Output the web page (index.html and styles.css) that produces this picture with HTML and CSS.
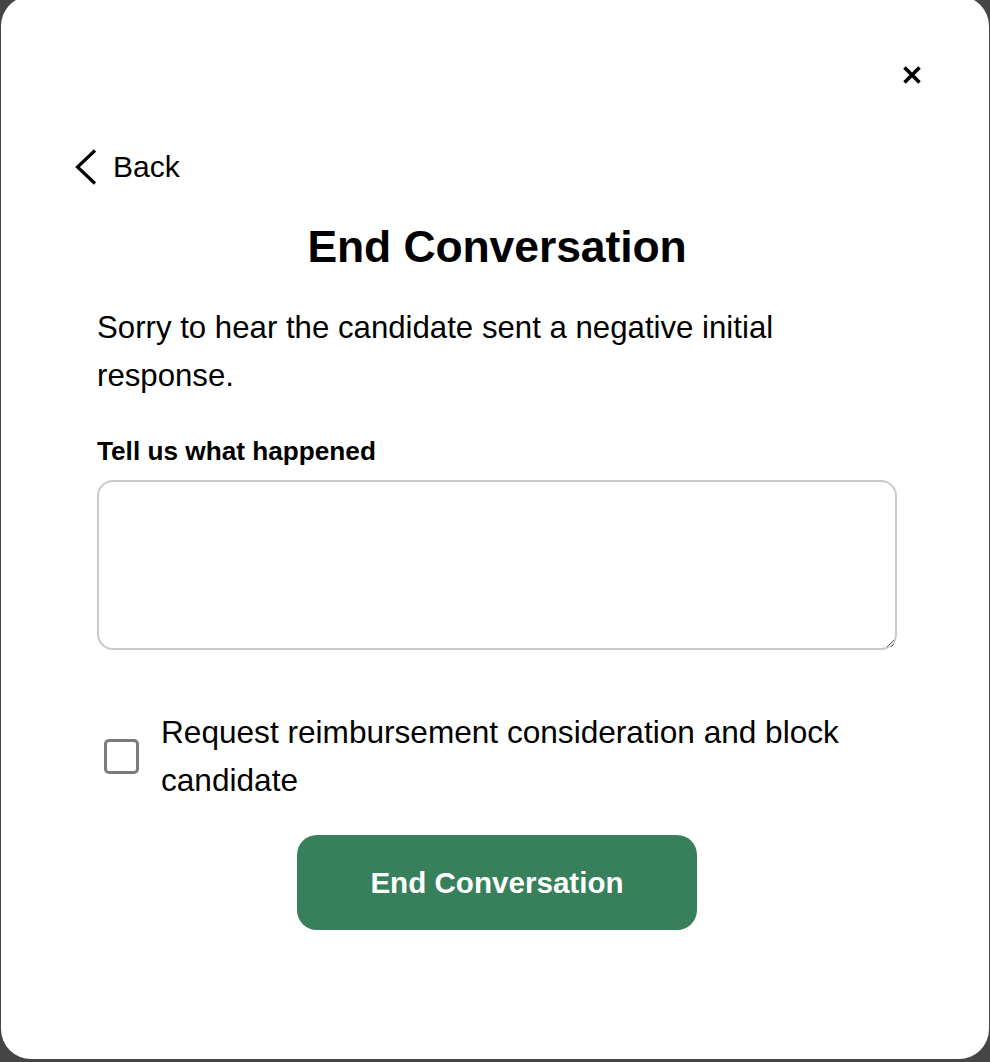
FILE: index.html
```html
<!DOCTYPE html>
<html lang="en">
<head>
<meta charset="utf-8">
<title>End Conversation</title>
<link rel="stylesheet" href="styles.css">
</head>
<body>
<div class="modal">
  <div class="modal-header">
    <button class="close-btn" aria-label="Close">
      <svg width="20" height="20" viewBox="0 0 20 20"><path d="M2.5 2.5 L17.5 17.5 M17.5 2.5 L2.5 17.5" stroke="#000" stroke-width="3.6" stroke-linecap="butt" fill="none"/></svg>
    </button>
  </div>
  <div class="modal-body">
    <a class="back-link" href="#">
      <svg class="chevron" width="24" height="36" viewBox="0 0 24 36"><polyline points="21,1.5 3.5,18 21,34.5" stroke="#000" stroke-width="3.2" fill="none" stroke-linejoin="miter"/></svg>
      <span>Back</span>
    </a>
    <h1 class="title">End Conversation</h1>
    <p class="intro">Sorry to hear the candidate sent a negative initial response.</p>
    <label class="field-label" for="what">Tell us what happened</label>
    <textarea id="what" class="field-input"></textarea>
    <label class="check-row">
      <span class="checkbox"></span>
      <span class="check-text">Request reimbursement consideration and block candidate</span>
    </label>
    <div class="actions">
      <button class="primary-btn">End Conversation</button>
    </div>
  </div>
</div>
</body>
</html>
```

FILE: styles.css
```css
* { box-sizing: border-box; }
html, body { margin: 0; padding: 0; }
body {
  background: #454545;
  font-family: "Liberation Sans", Arial, sans-serif;
  color: #000;
  height: 1062px;
  overflow: hidden;
}
.modal {
  margin: -4px 1px 0 1px;
  width: 988px;
  height: 1063px;
  background: #fff;
  border-radius: 30px;
  display: flex;
  flex-direction: column;
}
.modal-header {
  display: flex;
  justify-content: flex-end;
  padding: 69px 67px 0 0;
}
.close-btn {
  border: 0;
  background: none;
  padding: 0;
  width: 20px;
  height: 20px;
  display: block;
  cursor: pointer;
}
.close-btn svg { display: block; }
.modal-body {
  padding: 0 92px 0 96px;
  display: flex;
  flex-direction: column;
}
.back-link {
  margin: 64px 0 0 -23px;
  display: flex;
  align-items: center;
  gap: 15px;
  height: 36px;
  color: #000;
  text-decoration: none;
  font-size: 30px;
  line-height: 36px;
  align-self: flex-start;
}
.chevron { display: block; }
.title {
  margin: 35px 0 0 0;
  text-align: center;
  font-size: 44.5px;
  line-height: 53px;
  font-weight: 700;
  letter-spacing: -0.1px;
}
.intro {
  margin: 31px 0 0 0;
  font-size: 31.2px;
  line-height: 48px;
  font-weight: 400;
}
.field-label {
  margin-top: 35px;
  font-size: 26.2px;
  line-height: 32px;
  font-weight: 700;
}
.field-input {
  margin-top: 13px;
  width: 800px;
  height: 170px;
  border: 2px solid #c9c9ce;
  border-radius: 16px;
  font-family: inherit;
  font-size: 26px;
  padding: 12px 16px;
  resize: both;
  outline: none;
}
.check-row {
  margin-top: 58px;
  display: flex;
  align-items: center;
  gap: 22px;
  padding-left: 7px;
}
.checkbox {
  flex: none;
  width: 35px;
  height: 35px;
  border: 3px solid #7b7b7b;
  border-radius: 5px;
  background: #fff;
}
.check-text {
  font-size: 31.6px;
  line-height: 48px;
}
.actions {
  margin-top: 31px;
  display: flex;
  justify-content: center;
}
.primary-btn {
  width: 400px;
  height: 95px;
  border: 0;
  border-radius: 20px;
  background: #37805b;
  color: #fff;
  font-family: inherit;
  font-size: 29.6px;
  font-weight: 700;
  cursor: pointer;
}
```
